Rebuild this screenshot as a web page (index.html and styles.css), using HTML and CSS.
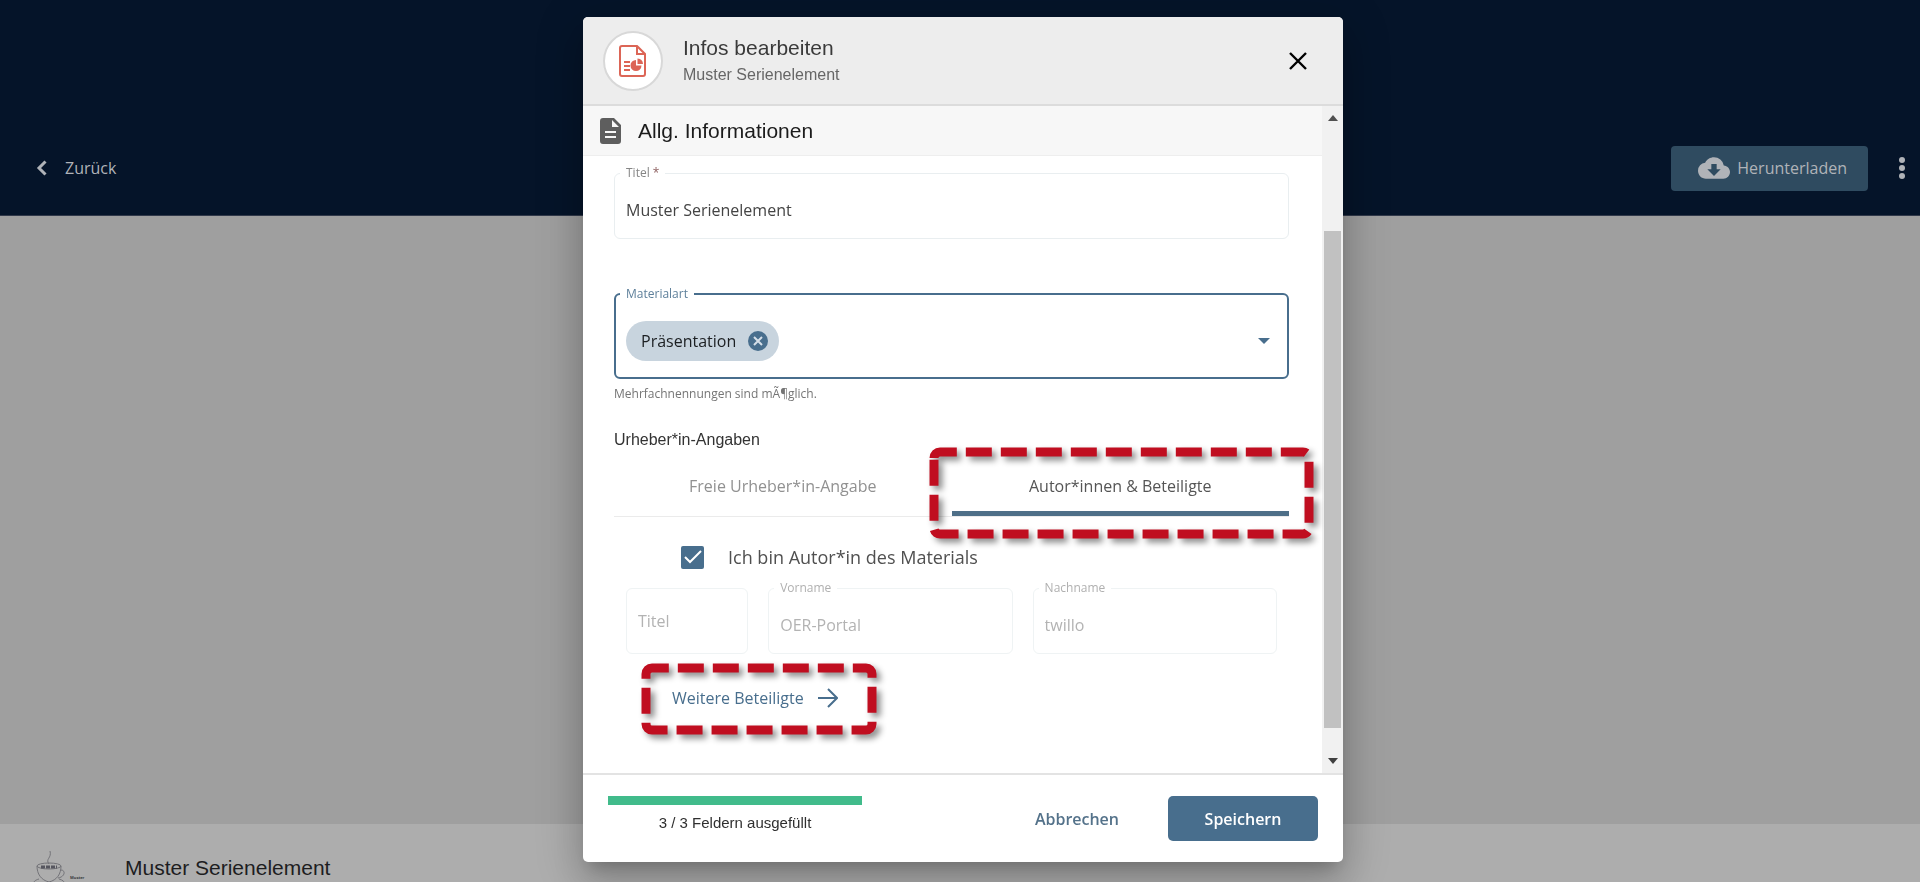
FILE: index.html
```html
<!DOCTYPE html>
<html lang="de">
<head>
<meta charset="utf-8">
<title>Infos bearbeiten</title>
<link rel="stylesheet" href="styles.css">
</head>
<body>
<div class="page">
  <header class="topbar">
    <a class="back" href="#">
      <svg width="12" height="16" viewBox="0 0 12 16"><path d="M9.500 1.500 3 8l6.500 6.500" fill="none" stroke="currentColor" stroke-width="3"/></svg>
      Zurück
    </a>
    <div class="actions">
      <button class="download" type="button">
        <svg width="32" height="32" viewBox="0 0 24 24"><path fill="currentColor" d="M19.350 10.040A7.490 7.490 0 0 0 12 4C9.110 4 6.600 5.640 5.350 8.040A5.994 5.994 0 0 0 0 14c0 3.310 2.690 6 6 6h13c2.760 0 5-2.240 5-5 0-2.640-2.050-4.780-4.650-4.960zM17 13l-5 5-5-5h3V9h4v4h3z"/></svg>
        Herunterladen
      </button>
      <button class="more" type="button" aria-label="Mehr">
        <svg width="8" height="24" viewBox="0 0 8 24"><g fill="currentColor"><circle cx="4" cy="4" r="3"/><circle cx="4" cy="12" r="3"/><circle cx="4" cy="20" r="3"/></g></svg>
      </button>
    </div>
  </header>
  <main class="preview"></main>
  <footer class="element">
    <svg class="thumb" width="60" height="40" viewBox="0 0 60 40">
      <g fill="none" stroke="#737378" stroke-width="1">
        <path d="M13 12c-4-5 3-6 1-13"/>
        <ellipse cx="13" cy="14" rx="12" ry="3"/>
        <path d="M1 14c0 8 4 14 12 16 8-2 12-8 12-16"/>
        <path d="M25 18c5 0 4 7-3 8"/>
        <path d="M3 27c-4 1-6 3-6 6M23 27c4 1 6 3 6 6"/>
      </g>
      <path d="M5 15h16" stroke="#56565f" stroke-width="3" stroke-dasharray="4 1"/>
      <text x="34" y="27" class="thumb-text">Muster</text>
    </svg>
    <h1 class="element-title">Muster Serienelement</h1>
  </footer>
</div>

<div class="overlay">
  <section class="dialog" role="dialog" aria-labelledby="dialog-title">
    <header class="dialog-head">
      <span class="avatar">
        <svg width="28" height="32" viewBox="0 0 28 32">
          <g fill="none" stroke="#dc6556" stroke-width="2"><path d="M3 1h15l8 8v20a2 2 0 0 1-2 2H3a2 2 0 0 1-2-2V3a2 2 0 0 1 2-2z"/><path d="M18 1v8h8"/><path d="M5 17h6M5 21h6M5 25h6"/></g>
          <path fill="#dc6556" d="M17 15v5.500h5.500A5.500 5.500 0 1 1 17 15z"/><path fill="#dc6556" d="M18.500 13.500a5.500 5.500 0 0 1 5.500 5.500h-5.500z"/>
        </svg>
      </span>
      <div class="titles">
        <h2 class="dialog-title" id="dialog-title">Infos bearbeiten</h2>
        <p class="dialog-sub">Muster Serienelement</p>
      </div>
      <button class="close" type="button" aria-label="Schließen">
        <svg width="18" height="18" viewBox="0 0 18 18"><path d="M1 1l16 16M17 1L1 17" stroke="#000" stroke-width="2.400"/></svg>
      </button>
    </header>

    <div class="dialog-body">
      <form class="content">
        <div class="section-head">
          <svg width="22" height="26" viewBox="0 0 22 26"><path fill="#5e5e5e" fill-rule="evenodd" d="M3 0h11l7 7v16a3 3 0 0 1-3 3H3a3 3 0 0 1-3-3V3a3 3 0 0 1 3-3zM12 2v7h7zM5 13v2h11v-2zM5 18v2h11v-2z"/></svg>
          <h3 class="section-title">Allg. Informationen</h3>
        </div>
        <div class="fields">
          <fieldset class="box">
            <legend><label for="titel">Titel <span class="star">*</span></label></legend>
            <input id="titel" class="text" type="text" value="Muster Serienelement">
          </fieldset>

          <fieldset class="box focused">
            <legend><label for="materialart">Materialart</label></legend>
            <span class="chip">Präsentation
              <button class="remove" type="button" aria-label="Entfernen"><svg width="20" height="20" viewBox="0 0 20 20"><circle cx="10" cy="10" r="10" fill="#486e8d"/><path d="M6 6l8 8M14 6l-8 8" stroke="#d5dfe8" stroke-width="2"/></svg></button>
            </span>
            <select id="materialart" class="pick"><option label=" "></option></select>
            <svg class="caret" width="12" height="6" viewBox="0 0 12 6"><path fill="#486e8d" d="M0 0h12L6 6z"/></svg>
          </fieldset>
          <p class="hint">Mehrfachnennungen sind mÃ¶glich.</p>

          <h4 class="group-title">Urheber*in-Angaben</h4>
          <div class="tabs" role="tablist">
            <button class="tab" type="button" role="tab">Freie Urheber*in-Angabe</button>
            <button class="tab active" type="button" role="tab" aria-selected="true">Autor*innen &amp; Beteiligte</button>
            <svg class="mark mark-tab" width="385" height="92" viewBox="0 0 385 92"><path d="M5 11a6 6 0 0 1 6-6H374a6 6 0 0 1 6 6V81a6 6 0 0 1-6 6H11a6 6 0 0 1-6-6z"/></svg>
          </div>

          <div class="check-row">
            <span class="check"><input id="autor" type="checkbox" checked><svg width="18" height="14" viewBox="0 0 18 14"><path d="M1 7l5 5L17 1" fill="none" stroke="#fff" stroke-width="2"/></svg></span>
            <label for="autor">Ich bin Autor*in des Materials</label>
          </div>

          <div class="person">
            <fieldset class="box muted plain"><input class="text" type="text" placeholder="Titel" aria-label="Titel" disabled></fieldset>
            <fieldset class="box muted"><legend><label for="vorname">Vorname</label></legend><input id="vorname" class="text" type="text" value="OER-Portal" disabled></fieldset>
            <fieldset class="box muted"><legend><label for="nachname">Nachname</label></legend><input id="nachname" class="text" type="text" value="twillo" disabled></fieldset>
          </div>

          <div class="further">
            <button class="link" type="button">Weitere Beteiligte
              <svg width="20" height="20" viewBox="0 0 20 20"><path d="M0 10h18M10 1l9 9-9 9" fill="none" stroke="currentColor" stroke-width="2"/></svg>
            </button>
            <svg class="mark mark-link" width="236" height="72" viewBox="0 0 236 72"><path d="M5 11a6 6 0 0 1 6-6H225a6 6 0 0 1 6 6V61a6 6 0 0 1-6 6H11a6 6 0 0 1-6-6z"/></svg>
          </div>
        </div>
      </form>
      <div class="scroll" aria-hidden="true">
        <svg width="10" height="6" viewBox="0 0 10 6"><path fill="#505050" d="M0 6h10L5 0z"/></svg>
        <div class="track"><div class="thumb-bar"></div></div>
        <svg width="10" height="6" viewBox="0 0 10 6"><path fill="#404040" d="M0 0h10L5 6z"/></svg>
      </div>
    </div>

    <footer class="dialog-foot">
      <div class="status">
        <progress id="fortschritt" value="3" max="3"></progress>
        <label for="fortschritt">3 / 3 Feldern ausgefüllt</label>
      </div>
      <div class="buttons">
        <button class="cancel" type="button">Abbrechen</button>
        <button class="save" type="submit">Speichern</button>
      </div>
    </footer>
  </section>
</div>
</body>
</html>
```
FILE: styles.css
```css
* { box-sizing: border-box; }
body { margin: 0; font-family: "Open Sans", sans-serif; font-size: 16px; color: #444; }
h1, h2, h3, h4, p { margin: 0; font-weight: 400; }
button { font: inherit; color: inherit; border: 0; padding: 0; background: none; cursor: pointer; }
svg { display: block; flex: none; }

.page { display: flex; flex-direction: column; height: 100vh; overflow: hidden; background: #9f9f9f; }
.topbar { display: flex; justify-content: space-between; align-items: center; flex: none; height: 216px; padding: 121px 14px 0 36px; background: #051429; color: #b0b3b8; border-bottom: 1px solid #31394a; }
.back { display: flex; align-items: center; gap: 17px; color: inherit; text-decoration: none; }
.actions { display: flex; align-items: center; gap: 30px; }
.download { display: flex; align-items: center; gap: 7px; height: 45px; padding: 0 21px 0 27px; border-radius: 4px; background: #2f4b60; }
.preview { flex: 1; }
.element { display: flex; align-items: flex-start; gap: 29px; flex: none; height: 58px; padding: 28px 36px 0; background: #adadad; }
.element-title { font: 21px/32px "Liberation Sans", Arial, sans-serif; color: #1d1d1f; }
.thumb { overflow: visible; }
.thumb-text { font: bold 4px "Open Sans", sans-serif; fill: #3c3c42; }

.overlay { position: fixed; inset: 0; display: flex; justify-content: center; align-items: flex-start; padding: 17px 0 20px 6px; }
.dialog { display: flex; flex-direction: column; width: 760px; max-width: 100%; height: 100%; border-radius: 5px; overflow: hidden; background: #fff; box-shadow: 0 11px 15px -7px rgba(0,0,0,.2), 0 24px 38px 3px rgba(0,0,0,.14), 0 9px 46px 8px rgba(0,0,0,.12); }
.dialog-head { display: flex; align-items: center; flex: none; height: 89px; padding: 0 36px 0 20px; background: #ededed; border-bottom: 2px solid #dcdcdc; }
.avatar { display: grid; place-items: center; width: 60px; height: 60px; border: 2px solid #d8d8d8; border-radius: 50%; background: #fff; }
.titles { flex: 1; padding-left: 20px; font-family: "Liberation Sans", Arial, sans-serif; }
.dialog-title { font-size: 21px; line-height: 28px; color: #3a3a3a; }
.dialog-sub { font-size: 16px; line-height: 26px; color: #666; }

.dialog-body { display: flex; flex: 1; min-height: 0; }
.content { flex: 1; min-width: 0; }
.section-head { display: flex; align-items: center; gap: 16px; height: 50px; padding-left: 17px; background: #f7f7f7; border-bottom: 1px solid #eee; }
.section-title { font: 21px/28px "Liberation Sans", Arial, sans-serif; color: #1c1c1c; }
.fields { padding: 9px 33px 0 31px; }

.box { display: flex; align-items: center; min-width: 0; height: 74px; margin: 0; padding: 0 11px; border: 1px solid #e9eef0; border-radius: 6px; }
.box legend { height: 16px; margin-left: -6px; padding: 0 6px; font-size: 12px; line-height: 16px; color: #858585; }
.star { color: #8d5f5f; }
.text { width: 100%; height: 40px; border: 0; padding: 0; outline: 0; background: none; font: inherit; color: #444; }
.focused { height: 93px; margin-top: 47px; padding: 3px 17px 0 10px; border: 2px solid #486e8d; }
.focused legend { color: #5d7f9a; }
.chip { display: flex; align-items: center; gap: 12px; height: 40px; padding: 0 11px 0 15px; border-radius: 20px; background: #c8d4de; font-weight: 500; color: #1c1f22; }
.remove { border-radius: 50%; }
.pick { flex: 1; min-width: 0; height: 40px; border: 0; outline: 0; appearance: none; background: none; }
.hint { margin-top: 6px; font-size: 12px; line-height: 18px; color: #757575; }
.group-title { margin-top: 24px; font: 16px/26px "Liberation Sans", Arial, sans-serif; color: #333; }

.tabs { position: relative; display: flex; height: 64px; border-bottom: 1px solid #ebebeb; }
.tab { flex: 1; padding-top: 7px; border-bottom: 5px solid transparent; color: #919191; }
.active { border-color: #4e6f88; color: #555; }
.mark { position: absolute; overflow: visible; pointer-events: none; fill: none; stroke: #c00e20; stroke-width: 9; stroke-dasharray: 26 9; filter: drop-shadow(4px 4px 3px rgba(0,0,0,.45)); }
.mark-tab { top: -6px; right: -25px; }

.check-row { display: flex; align-items: center; gap: 24px; height: 32px; margin-top: 24px; padding-left: 67px; font-size: 18px; color: #505050; }
.check { display: grid; place-items: center; }
.check > * { grid-area: 1 / 1; }
.check input { appearance: none; width: 23px; height: 23px; margin: 0; border-radius: 2px; background: #486e8d; }
.check svg { z-index: 1; pointer-events: none; }
.person { display: grid; grid-template-columns: 1fr 2fr 2fr; align-items: end; gap: 20px; margin-top: 7px; padding: 0 12px; }
.muted { border-color: #eff3f4; }
.muted legend { color: #b0b0b0; }
.muted .text, .muted .text::placeholder { color: #b3b3b3; opacity: 1; }
.plain { height: 66px; }

.further { position: relative; display: flex; margin-top: 28px; padding-left: 58px; }
.link { display: flex; align-items: center; gap: 14px; height: 32px; color: #486e8d; }
.mark-link { top: -19px; left: 27px; }

.scroll { display: flex; flex-direction: column; align-items: center; width: 21px; padding: 9px 0; background: #f1f1f1; }
.track { flex: 1; align-self: stretch; padding: 110px 2px 30px; }
.thumb-bar { height: 100%; background: #c1c1c1; }

.dialog-foot { display: flex; justify-content: space-between; flex: none; height: 89px; padding: 21px 25px 0; border-top: 2px solid #e3e3e3; }
.status { display: flex; flex-direction: column; align-items: center; gap: 8px; width: 254px; font: 15px/20px "Liberation Sans", Arial, sans-serif; color: #2f2f2f; }
progress { appearance: none; width: 100%; height: 9px; border: 0; background: #dfeee7; }
progress::-webkit-progress-bar { background: #dfeee7; }
progress::-webkit-progress-value { background: #41bb8b; }
.buttons { display: flex; align-items: flex-start; gap: 49px; font-weight: 600; }
.cancel { height: 45px; color: #54728a; }
.save { width: 150px; height: 45px; border-radius: 5px; background: #486e8d; color: #fff; }
```
